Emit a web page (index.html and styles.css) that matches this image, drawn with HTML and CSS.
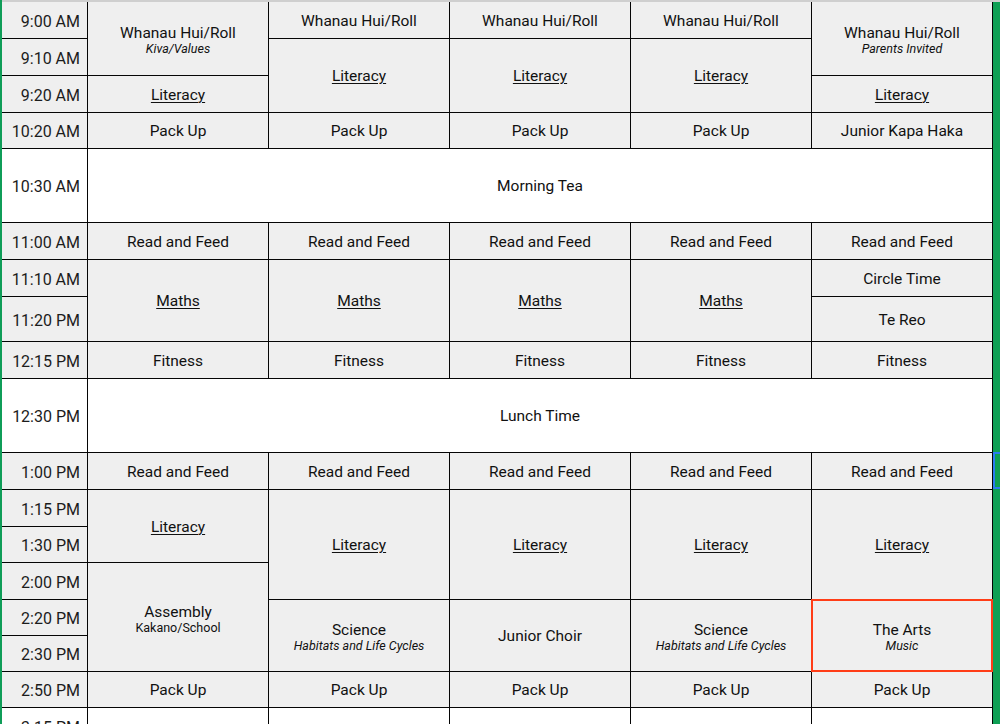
FILE: index.html
```html
<!DOCTYPE html>
<html lang="en">
<head>
<meta charset="utf-8">
<title>Timetable</title>
<link rel="stylesheet" href="styles.css">
</head>
<body>
<div class="page">
  <div class="rail-left"></div>
  <div class="main">
    <div class="topline"></div>
    <div class="body">
      <div class="sheet">
        <!-- row 1 -->
        <div class="time">9:00 AM</div>
        <div class="cell span-r2 pair"><div class="title">Whanau Hui/Roll</div><div class="sub italic">Kiva/Values</div></div>
        <div class="cell"><div class="title">Whanau Hui/Roll</div></div>
        <div class="cell"><div class="title">Whanau Hui/Roll</div></div>
        <div class="cell"><div class="title">Whanau Hui/Roll</div></div>
        <div class="cell span-r2 pair"><div class="title">Whanau Hui/Roll</div><div class="sub italic">Parents Invited</div></div>
        <!-- row 2 -->
        <div class="time">9:10 AM</div>
        <div class="cell span-r2"><div class="title link">Literacy</div></div>
        <div class="cell span-r2"><div class="title link">Literacy</div></div>
        <div class="cell span-r2"><div class="title link">Literacy</div></div>
        <!-- row 3 -->
        <div class="time">9:20 AM</div>
        <div class="cell"><div class="title link">Literacy</div></div>
        <div class="cell"><div class="title link">Literacy</div></div>
        <!-- row 4 -->
        <div class="time">10:20 AM</div>
        <div class="cell"><div class="title">Pack Up</div></div>
        <div class="cell"><div class="title">Pack Up</div></div>
        <div class="cell"><div class="title">Pack Up</div></div>
        <div class="cell"><div class="title">Pack Up</div></div>
        <div class="cell"><div class="title">Junior Kapa Haka</div></div>
        <!-- row 5 -->
        <div class="time white">10:30 AM</div>
        <div class="cell white span-all"><div class="title">Morning Tea</div></div>
        <!-- row 6 -->
        <div class="time">11:00 AM</div>
        <div class="cell"><div class="title">Read and Feed</div></div>
        <div class="cell"><div class="title">Read and Feed</div></div>
        <div class="cell"><div class="title">Read and Feed</div></div>
        <div class="cell"><div class="title">Read and Feed</div></div>
        <div class="cell"><div class="title">Read and Feed</div></div>
        <!-- row 7 -->
        <div class="time">11:10 AM</div>
        <div class="cell span-r2"><div class="title link">Maths</div></div>
        <div class="cell span-r2"><div class="title link">Maths</div></div>
        <div class="cell span-r2"><div class="title link">Maths</div></div>
        <div class="cell span-r2"><div class="title link">Maths</div></div>
        <div class="cell"><div class="title">Circle Time</div></div>
        <!-- row 8 -->
        <div class="time">11:20 PM</div>
        <div class="cell"><div class="title">Te Reo</div></div>
        <!-- row 9 -->
        <div class="time">12:15 PM</div>
        <div class="cell"><div class="title">Fitness</div></div>
        <div class="cell"><div class="title">Fitness</div></div>
        <div class="cell"><div class="title">Fitness</div></div>
        <div class="cell"><div class="title">Fitness</div></div>
        <div class="cell"><div class="title">Fitness</div></div>
        <!-- row 10 -->
        <div class="time white">12:30 PM</div>
        <div class="cell white span-all"><div class="title">Lunch Time</div></div>
        <!-- row 11 -->
        <div class="time">1:00 PM</div>
        <div class="cell"><div class="title">Read and Feed</div></div>
        <div class="cell"><div class="title">Read and Feed</div></div>
        <div class="cell"><div class="title">Read and Feed</div></div>
        <div class="cell"><div class="title">Read and Feed</div></div>
        <div class="cell"><div class="title">Read and Feed</div></div>
        <!-- row 12 -->
        <div class="time">1:15 PM</div>
        <div class="cell span-r2"><div class="title link">Literacy</div></div>
        <div class="cell span-r3"><div class="title link">Literacy</div></div>
        <div class="cell span-r3"><div class="title link">Literacy</div></div>
        <div class="cell span-r3"><div class="title link">Literacy</div></div>
        <div class="cell span-r3"><div class="title link">Literacy</div></div>
        <!-- row 13 -->
        <div class="time">1:30 PM</div>
        <!-- row 14 -->
        <div class="time">2:00 PM</div>
        <div class="cell span-r3 pair"><div class="title">Assembly</div><div class="sub">Kakano/School</div></div>
        <!-- row 15 -->
        <div class="time">2:20 PM</div>
        <div class="cell span-r2 pair"><div class="title">Science</div><div class="sub italic">Habitats and Life Cycles</div></div>
        <div class="cell span-r2"><div class="title">Junior Choir</div></div>
        <div class="cell span-r2 pair"><div class="title">Science</div><div class="sub italic">Habitats and Life Cycles</div></div>
        <div class="cell span-r2 pair selected"><div class="title">The Arts</div><div class="sub italic">Music</div></div>
        <!-- row 16 -->
        <div class="time">2:30 PM</div>
        <!-- row 17 -->
        <div class="time">2:50 PM</div>
        <div class="cell"><div class="title">Pack Up</div></div>
        <div class="cell"><div class="title">Pack Up</div></div>
        <div class="cell"><div class="title">Pack Up</div></div>
        <div class="cell"><div class="title">Pack Up</div></div>
        <div class="cell"><div class="title">Pack Up</div></div>
        <!-- row 18 -->
        <div class="time white">3:15 PM</div>
        <div class="cell white"></div>
        <div class="cell white"></div>
        <div class="cell white"></div>
        <div class="cell white"></div>
        <div class="cell white"></div>
      </div>
      <div class="rail-right"><div class="blue-mark"></div></div>
    </div>
  </div>
</div>
</body>
</html>
```

FILE: styles.css
```css
html, body {
  margin: 0;
  padding: 0;
  width: 1000px;
  height: 724px;
  overflow: hidden;
  background: #ffffff;
}

body {
  font-family: Roboto, "Liberation Sans", Arial, sans-serif;
  color: #111111;
}

.page {
  display: flex;
  width: 1000px;
  height: 724px;
}

.rail-left {
  width: 2px;
  flex: none;
  background: #0f9d58;
}

.main {
  flex: 1;
  display: flex;
  flex-direction: column;
  min-width: 0;
}

.topline {
  height: 2px;
  flex: none;
  background: #cfcfcf;
}

.body {
  display: flex;
  flex: 1;
  min-height: 0;
}

.sheet {
  display: grid;
  grid-template-columns: 85px repeat(5, 180px);
  grid-template-rows: 36px 36px 36px 35px 73px 36px 36px 44px 36px 73px 36px 36px 35px 36px 35px 35px 35px 36px;
  gap: 1px;
  padding-right: 1px;
  background: #050505;
  align-self: flex-start;
  flex: none;
}

.time {
  grid-column: 1;
  background: #efefef;
  display: flex;
  align-items: center;
  justify-content: flex-end;
  padding-right: 7px;
  padding-top: 2px;
  font-size: 16px;
  color: #1c1c1c;
  white-space: nowrap;
}

.cell {
  background: #efefef;
  display: flex;
  flex-direction: column;
  align-items: center;
  justify-content: center;
  text-align: center;
  position: relative;
  padding-top: 2px;
}

.pair {
  padding-top: 4px;
}

.white {
  background: #ffffff;
}

.span-r2 {
  grid-row: span 2;
}

.span-r3 {
  grid-row: span 3;
}

.span-all {
  grid-column: span 5;
}

.title {
  font-size: 15.5px;
  line-height: 17px;
  white-space: nowrap;
}

.link {
  text-decoration: underline;
  text-decoration-thickness: 1px;
  text-underline-offset: 2px;
}

.sub {
  font-size: 12.5px;
  line-height: 14px;
  white-space: nowrap;
}

.italic {
  font-style: italic;
}

.selected::after {
  content: "";
  position: absolute;
  left: -1px;
  top: -1px;
  right: -1px;
  bottom: -1px;
  border: 2px solid #ff3d17;
  pointer-events: none;
}

.rail-right {
  flex: 1;
  background: #0fa055;
  position: relative;
}

.blue-mark {
  position: absolute;
  left: 0;
  top: 450px;
  width: 12px;
  height: 33px;
  border: 2px solid #2a7cf0;
}
```
